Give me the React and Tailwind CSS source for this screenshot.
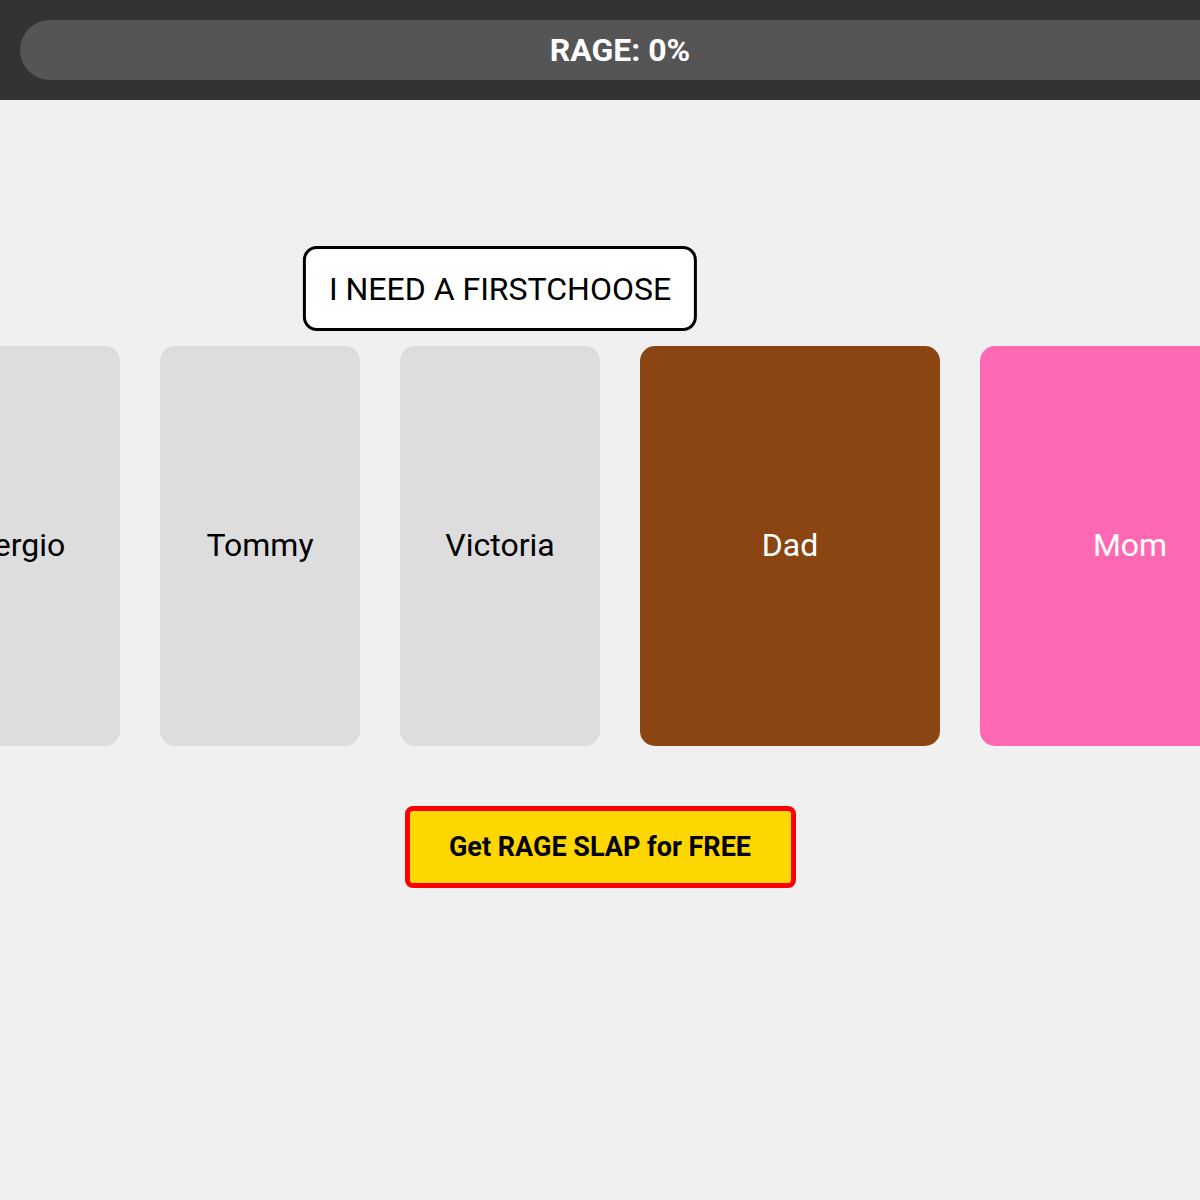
export default function App() {
  const cards = [
    { name: "Sergio", w: "w-[200px]", bg: "bg-[#dddddd]", text: "text-black" },
    { name: "Tommy", w: "w-[200px]", bg: "bg-[#dddddd]", text: "text-black" },
    { name: "Victoria", w: "w-[200px]", bg: "bg-[#dddddd]", text: "text-black", bubble: true },
    { name: "Dad", w: "w-[300px]", bg: "bg-[#8b4513]", text: "text-white" },
    { name: "Mom", w: "w-[300px]", bg: "bg-[#ff69b4]", text: "text-white" },
  ];
  return (
    <div className="w-[1200px] h-[1200px] overflow-hidden bg-[#f0f0f0] font-['Roboto',sans-serif]">
      <div className="h-[100px] bg-[#333333] py-[20px] pl-[20px] flex">
        <div className="w-[1200px] shrink-0 h-[60px] rounded-l-[30px] bg-[#555555] flex items-center justify-center">
          <span className="text-white font-bold text-[32px] leading-none">RAGE: 0%</span>
        </div>
      </div>
      <div className="flex justify-center gap-[40px] mt-[246px]">
        {cards.map((c) => (
          <div
            key={c.name}
            className={`relative shrink-0 h-[400px] ${c.w} ${c.bg} rounded-[15px] flex items-center justify-center`}
          >
            <span className={`${c.text} text-[32px] -translate-y-px`}>{c.name}</span>
            {c.bubble && (
              <div className="absolute bottom-[415px] left-1/2 -translate-x-1/2 whitespace-nowrap bg-white border-[3px] border-black rounded-[14px] h-[85px] px-[23px] flex items-center text-[32px] text-black">
                I NEED A FIRSTCHOOSE
              </div>
            )}
          </div>
        ))}
      </div>
      <div className="flex justify-center mt-[60px]">
        <button className="w-[391px] h-[82px] bg-[#ffd700] border-[5px] border-[#ff0000] rounded-[8px] text-[27px] font-bold text-black flex items-center justify-center">
          Get RAGE SLAP for FREE
        </button>
      </div>
    </div>
  );
}
